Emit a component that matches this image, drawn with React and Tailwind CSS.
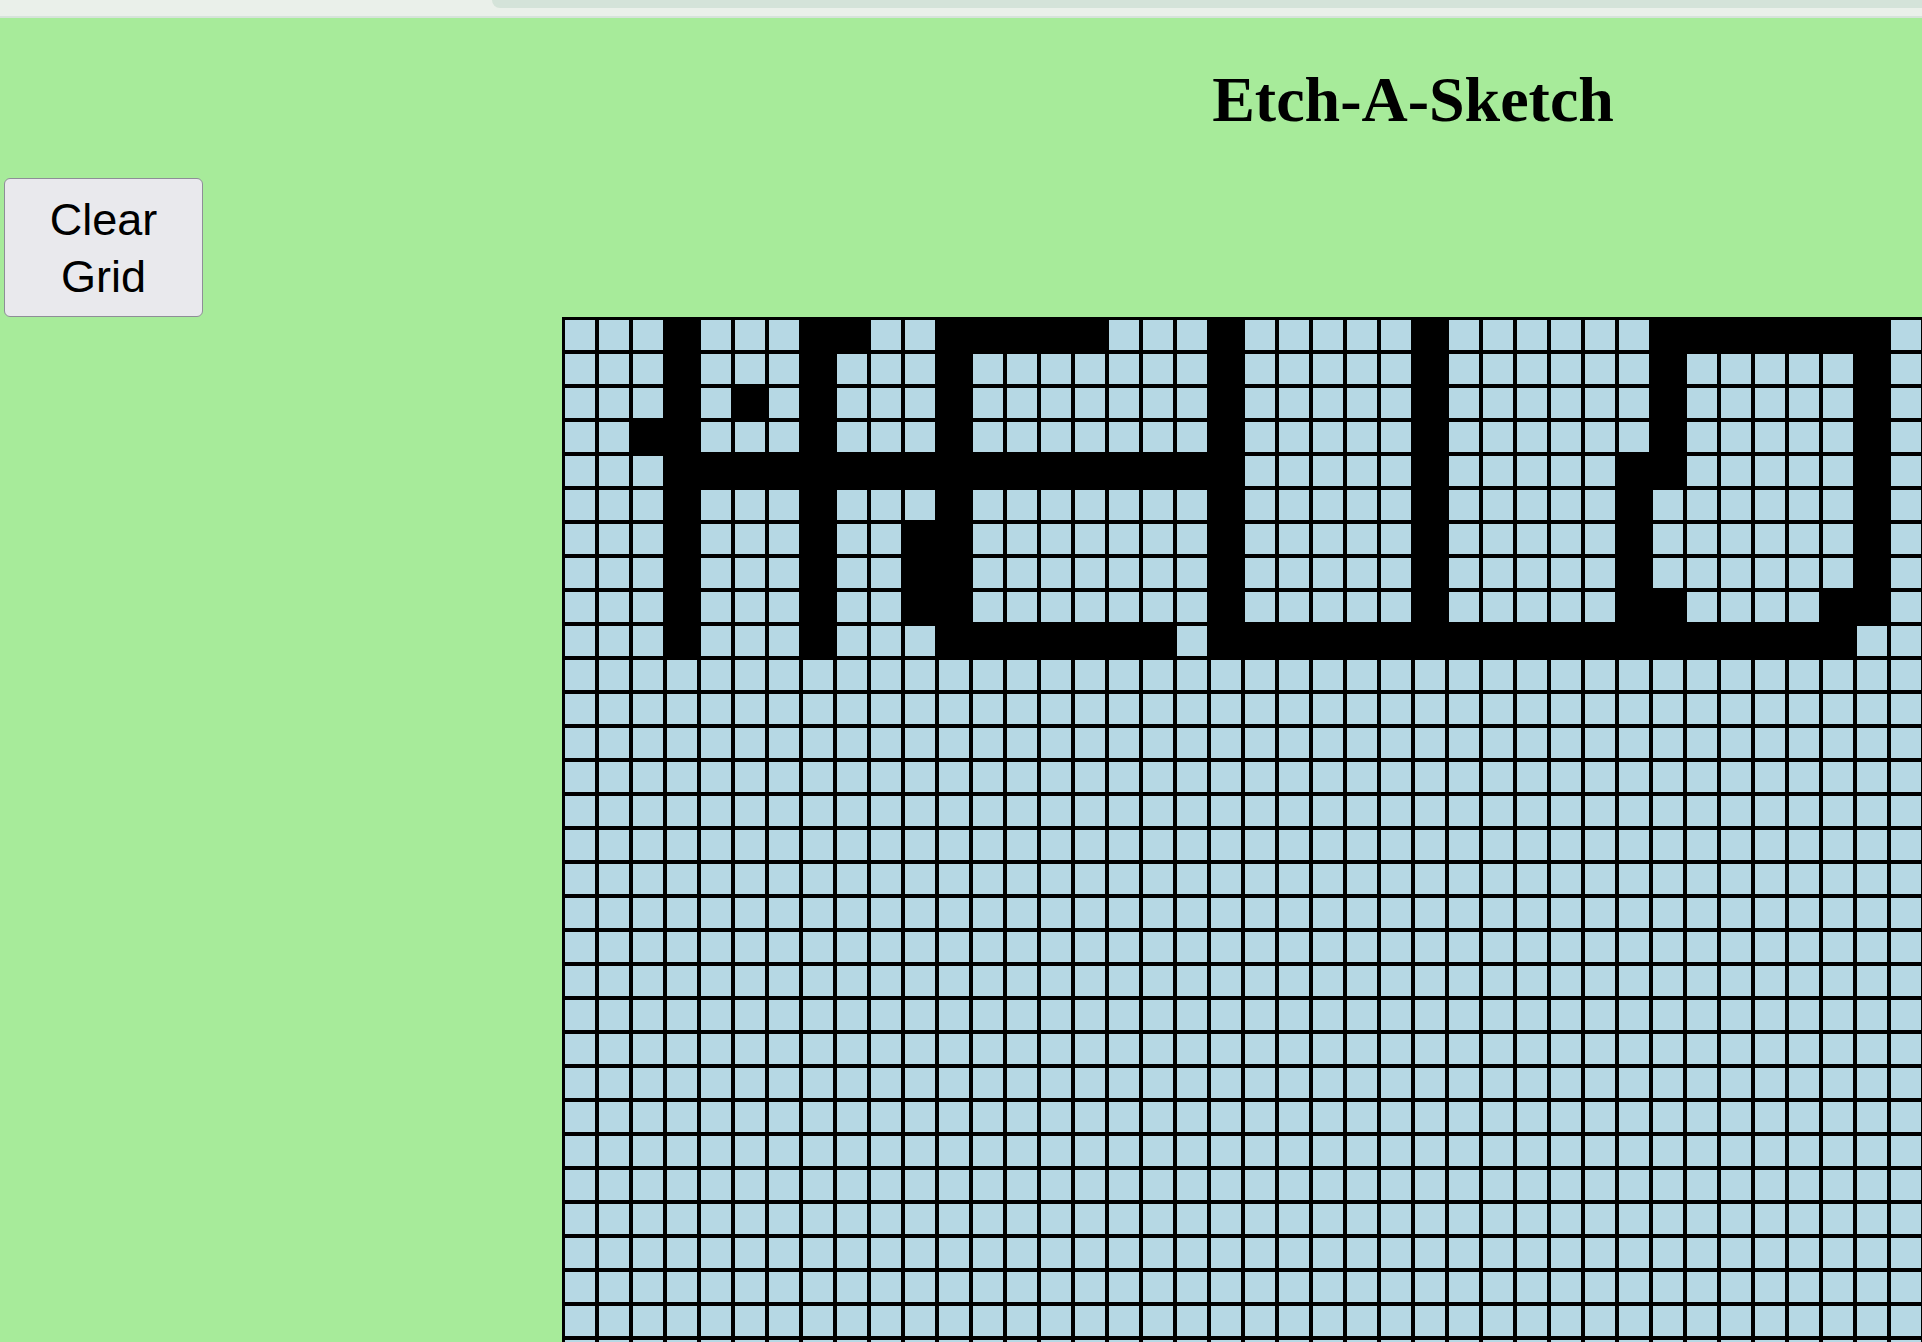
import React from "react";

const COLS = 50;
const ROWS = 50;

// black cells for rows 0-9 as [start, end] inclusive ranges
const DRAWN = [
  [[3, 3], [7, 8], [11, 15], [19, 19], [25, 25], [32, 38]],
  [[3, 3], [7, 7], [11, 11], [19, 19], [25, 25], [32, 32], [38, 38]],
  [[3, 3], [5, 5], [7, 7], [11, 11], [19, 19], [25, 25], [32, 32], [38, 38]],
  [[2, 3], [7, 7], [11, 11], [19, 19], [25, 25], [32, 32], [38, 38]],
  [[3, 19], [25, 25], [31, 32], [38, 38]],
  [[3, 3], [7, 7], [11, 11], [19, 19], [25, 25], [31, 31], [38, 38]],
  [[3, 3], [7, 7], [10, 11], [19, 19], [25, 25], [31, 31], [38, 38]],
  [[3, 3], [7, 7], [10, 11], [19, 19], [25, 25], [31, 31], [38, 38]],
  [[3, 3], [7, 7], [10, 11], [19, 19], [25, 25], [31, 32], [37, 38]],
  [[3, 3], [7, 7], [11, 17], [19, 37]],
];

function isBlack(r, c) {
  const ranges = DRAWN[r];
  if (!ranges) return false;
  return ranges.some(([a, b]) => c >= a && c <= b);
}

export default function App() {
  const cells = [];
  for (let r = 0; r < ROWS; r++) {
    for (let c = 0; c < COLS; c++) {
      cells.push(
        <div
          key={r * COLS + c}
          className={
            isBlack(r, c)
              ? "w-[34px] h-[34px] border-2 border-black bg-black"
              : "w-[34px] h-[34px] border-2 border-black bg-[#b6d8e4]"
          }
        />
      );
    }
  }

  return (
    <div className="w-full h-[1342px] overflow-hidden bg-[#a7eb9a]">
      {/* top strip */}
      <div className="h-[16px] bg-[#eaf0ea] flex justify-end">
        <div className="w-[1430px] h-[8px] bg-[#d4e3d9] rounded-bl-[8px]" />
      </div>
      <div className="h-[2px] bg-[#d6e3da]" />

      <div className="flex items-start">
        <div className="w-[562px] shrink-0">
          <button
            className="ml-[4px] mt-[160px] w-[199px] h-[139px] flex items-center justify-center bg-[#e9e9ed] border border-[#8e8e97] rounded-[6px] text-black text-[45px] leading-[57px] text-center"
            style={{ fontFamily: '"Liberation Sans", Arial, sans-serif' }}
          >
            Clear
            <br />
            Grid
          </button>
        </div>

        <div className="w-[1702px] shrink-0">
          <h1
            className="mt-[45px] h-[74px] text-center text-[64px] leading-[74px] font-bold text-black"
            style={{ fontFamily: '"Liberation Serif", "Times New Roman", serif' }}
          >
            Etch-A-Sketch
          </h1>
          <div className="mt-[180px] border border-black grid grid-cols-[repeat(50,34px)] w-[1702px]">
            {cells}
          </div>
        </div>
      </div>
    </div>
  );
}
